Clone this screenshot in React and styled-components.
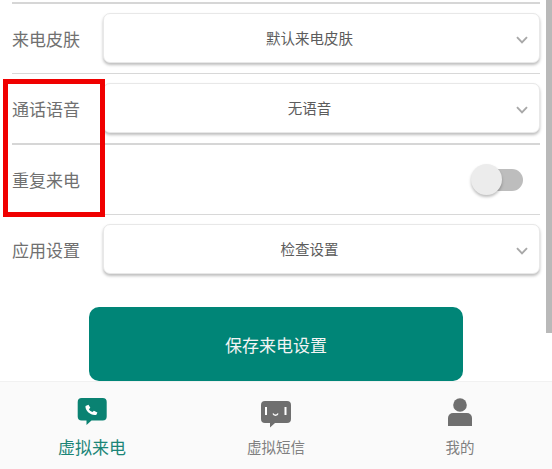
import React from "react";
import styled, { createGlobalStyle } from "styled-components";

const Global = createGlobalStyle`
  html, body { margin: 0; padding: 0; background: #fff; }
  body { font-family: "Roboto", "Noto Sans CJK SC", sans-serif; }
`;

const Page = styled.div`
  width: 552px;
  height: 469px;
  overflow: hidden;
  position: relative;
  display: flex;
  flex-direction: column;
  background: #fff;
`;

const Form = styled.div`
  height: 307px;
  padding: 2px 12px 0;
  box-sizing: border-box;
  flex: none;
`;

const Row = styled.div`
  height: ${(p) => p.$h}px;
  box-sizing: border-box;
  border-top: ${(p) => (p.$thick ? "2px solid #d6d6d6" : "1px solid #d8d8d8")};
  display: flex;
  align-items: center;
`;

const Label = styled.div`
  width: 91px;
  flex: none;
  font-size: 17px;
  color: #707070;
  font-family: "Noto Sans CJK SC", sans-serif;
`;

const Select = styled.div`
  flex: 1;
  height: 50px;
  margin-bottom: 2px;
  box-sizing: border-box;
  border: 1px solid #e8e8e8;
  border-radius: 7px;
  box-shadow: 0 2px 3px rgba(0, 0, 0, 0.26);
  display: flex;
  align-items: center;
  justify-content: center;
  position: relative;
  background: #fff;
  font-size: 14.5px;
  color: #5c5c5c;
  font-family: "Noto Sans CJK SC", sans-serif;
  padding: 0 24px 1px 0;
`;

const Chevron = styled.svg`
  position: absolute;
  right: 11px;
  top: 22px;
  width: 12px;
  height: 8px;
`;

const SwitchWrap = styled.div`
  margin-left: auto;
  width: 52px;
  height: 32px;
  position: relative;
  margin-right: 17px;
`;

const Track = styled.div`
  position: absolute;
  left: 9px;
  top: 5px;
  right: 0;
  height: 22px;
  border-radius: 11px;
  background: #bdbdbd;
`;

const Thumb = styled.div`
  position: absolute;
  left: 0;
  top: 0;
  width: 31px;
  height: 31px;
  border-radius: 50%;
  background: #ececec;
  box-shadow: 0 2px 3px rgba(0, 0, 0, 0.26);
`;

const SaveArea = styled.div`
  height: 74px;
  flex: none;
  display: flex;
  justify-content: center;
`;

const Save = styled.div`
  width: 374px;
  height: 74px;
  border-radius: 10px;
  background: #008577;
  color: #f4f4f4;
  font-size: 17px;
  font-family: "Noto Sans CJK SC", sans-serif;
  display: flex;
  align-items: center;
  justify-content: center;
`;

const TabBar = styled.div`
  flex: 1;
  background: #fafafa;
  display: grid;
  grid-template-columns: 1fr 1fr 1fr;
  border-top: 1px solid #f1f1f1;
  box-sizing: border-box;
`;

const Tab = styled.div`
  display: flex;
  flex-direction: column;
  align-items: center;
  padding-top: 16px;
  box-sizing: border-box;
  color: ${(p) => (p.$active ? "#1b8577" : "#808080")};
  font-family: "Noto Sans CJK SC", sans-serif;
  font-size: ${(p) => (p.$active ? "17px" : "14.5px")};
`;

const TabIcon = styled.svg`
  width: 32px;
  height: 30px;
  display: block;
  color: ${(p) => (p.$active ? "#0a8272" : "#6f6f6f")};
`;

const TabText = styled.div`
  margin-top: 7px;
  line-height: 24px;
`;

const Marker = styled.div`
  position: absolute;
  left: 3px;
  top: 79px;
  width: 102px;
  height: 138px;
  box-sizing: border-box;
  border: 5px solid #f00000;
`;

const Scrollbar = styled.div`
  position: absolute;
  right: 0;
  top: 0;
  width: 6px;
  height: 333px;
  background: #b9b9b9;
`;

const Arrow = () => (
  <Chevron viewBox="0 0 12 8">
    <path d="M1 1.2 L6 6.4 L11 1.2" fill="none" stroke="#a8a8a8" strokeWidth="1.9" />
  </Chevron>
);

export default function App() {
  return (
    <Page>
      <Global />
      <Form>
        <Row $thick $h={71}>
          <Label>来电皮肤</Label>
          <Select>默认来电皮肤<Arrow /></Select>
        </Row>
        <Row $h={70}>
          <Label>通话语音</Label>
          <Select>无语音<Arrow /></Select>
        </Row>
        <Row $thick $h={71}>
          <Label>重复来电</Label>
          <SwitchWrap>
            <Track />
            <Thumb />
          </SwitchWrap>
        </Row>
        <Row $h={70}>
          <Label>应用设置</Label>
          <Select>检查设置<Arrow /></Select>
        </Row>
      </Form>
      <SaveArea>
        <Save>保存来电设置</Save>
      </SaveArea>
      <TabBar>
        <Tab $active>
          <TabIcon $active viewBox="0 0 32 30">
            <path fill="currentColor" d="M5.700 0h21a4 4 0 0 1 4 4v14.500a4 4 0 0 1-4 4H15.500l-5 4.500v-4.500H5.700a4 4 0 0 1-4-4V4a4 4 0 0 1 4-4z" />
            <path fill="#fff" d="M9.500 8l3-1.200 1.800 3-1.400 1.400c.8 1.300 2 2.200 3.600 2.700l1.400-1.200 3.500 1.800-1 2.200c-5 1.200-11.500-3.500-10.900-8.700z" />
          </TabIcon>
          <TabText>虚拟来电</TabText>
        </Tab>
        <Tab>
          <TabIcon viewBox="0 0 32 30">
            <path fill="currentColor" d="M5 3h22a4 4 0 0 1 4 4v14a4 4 0 0 1-4 4H15l-5 4.500V25H5a4 4 0 0 1-4-4V7a4 4 0 0 1 4-4z" />
            <path fill="none" stroke="#fff" strokeWidth="2" d="M6 9v8M25.500 9v8" />
            <path fill="none" stroke="#fff" strokeWidth="1.300" d="M13 15.500c.8 2.300 4.200 2.300 5 0" />
          </TabIcon>
          <TabText>虚拟短信</TabText>
        </Tab>
        <Tab>
          <TabIcon viewBox="0 0 32 30">
            <circle cx="16" cy="7" r="6.800" fill="currentColor" />
            <path fill="currentColor" d="M4 28v-8a5 5 0 0 1 5-5h14a5 5 0 0 1 5 5v8z" />
          </TabIcon>
          <TabText>我的</TabText>
        </Tab>
      </TabBar>
      <Marker />
      <Scrollbar />
    </Page>
  );
}
